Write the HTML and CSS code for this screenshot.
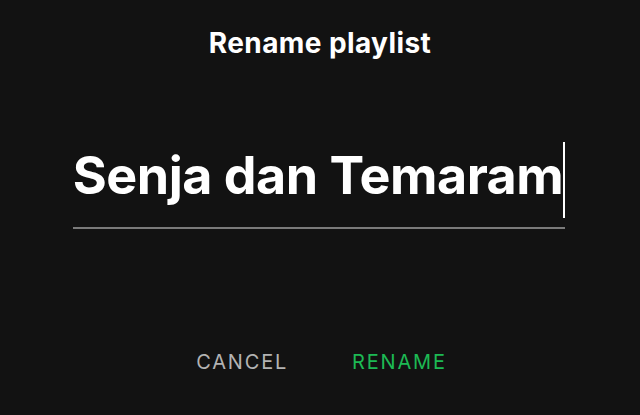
FILE: index.html
```html
<!DOCTYPE html>
<html>
<head>
<meta charset="utf-8">
<link rel="stylesheet" href="styles.css">
</head>
<body>
<main class="dialog">
  <h1 class="title">Rename playlist</h1>
  <div class="field">
    <span class="value">Senja dan Temaram</span><span class="caret"></span>
  </div>
  <div class="actions">
    <button class="btn cancel">CANCEL</button>
    <button class="btn rename">RENAME</button>
  </div>
</main>
</body>
</html>
```
FILE: styles.css
```css
html, body {
  margin: 0;
  padding: 0;
  background: #121212;
  width: 640px;
  height: 415px;
  overflow: hidden;
}
.dialog {
  display: flex;
  flex-direction: column;
  align-items: center;
  padding-top: 27px;
  font-family: Inter, "Noto Sans", sans-serif;
  color: #ffffff;
}
.title {
  margin: 0;
  font-size: 28px;
  line-height: 32px;
  font-weight: 700;
  letter-spacing: 0.4px;
}
.field {
  margin-top: 83px;
  width: 492px;
  display: flex;
  justify-content: center;
  align-items: stretch;
  height: 76px;
  padding-bottom: 9px;
  border-bottom: 2px solid #7a7a7a;
  margin-left: -2px;
}
.value {
  flex-shrink: 0;
  white-space: nowrap;
  font-size: 52px;
  line-height: 68px;
  font-weight: 700;
  letter-spacing: -0.5px;
}
.caret {
  flex-shrink: 0;
  width: 2px;
  background: #ffffff;
  margin-left: 0;
}
.actions {
  margin-top: 121px;
  display: flex;
  gap: 64px;
  margin-left: 3px;
}
.btn {
  background: none;
  border: 0;
  padding: 0;
  font-family: Inter, "Noto Sans", sans-serif;
  font-size: 20px;
  line-height: 24px;
  letter-spacing: 1.8px;
  font-weight: 400;
}
.cancel { color: #b3b3b3; }
.rename { color: #1db954; }
```
